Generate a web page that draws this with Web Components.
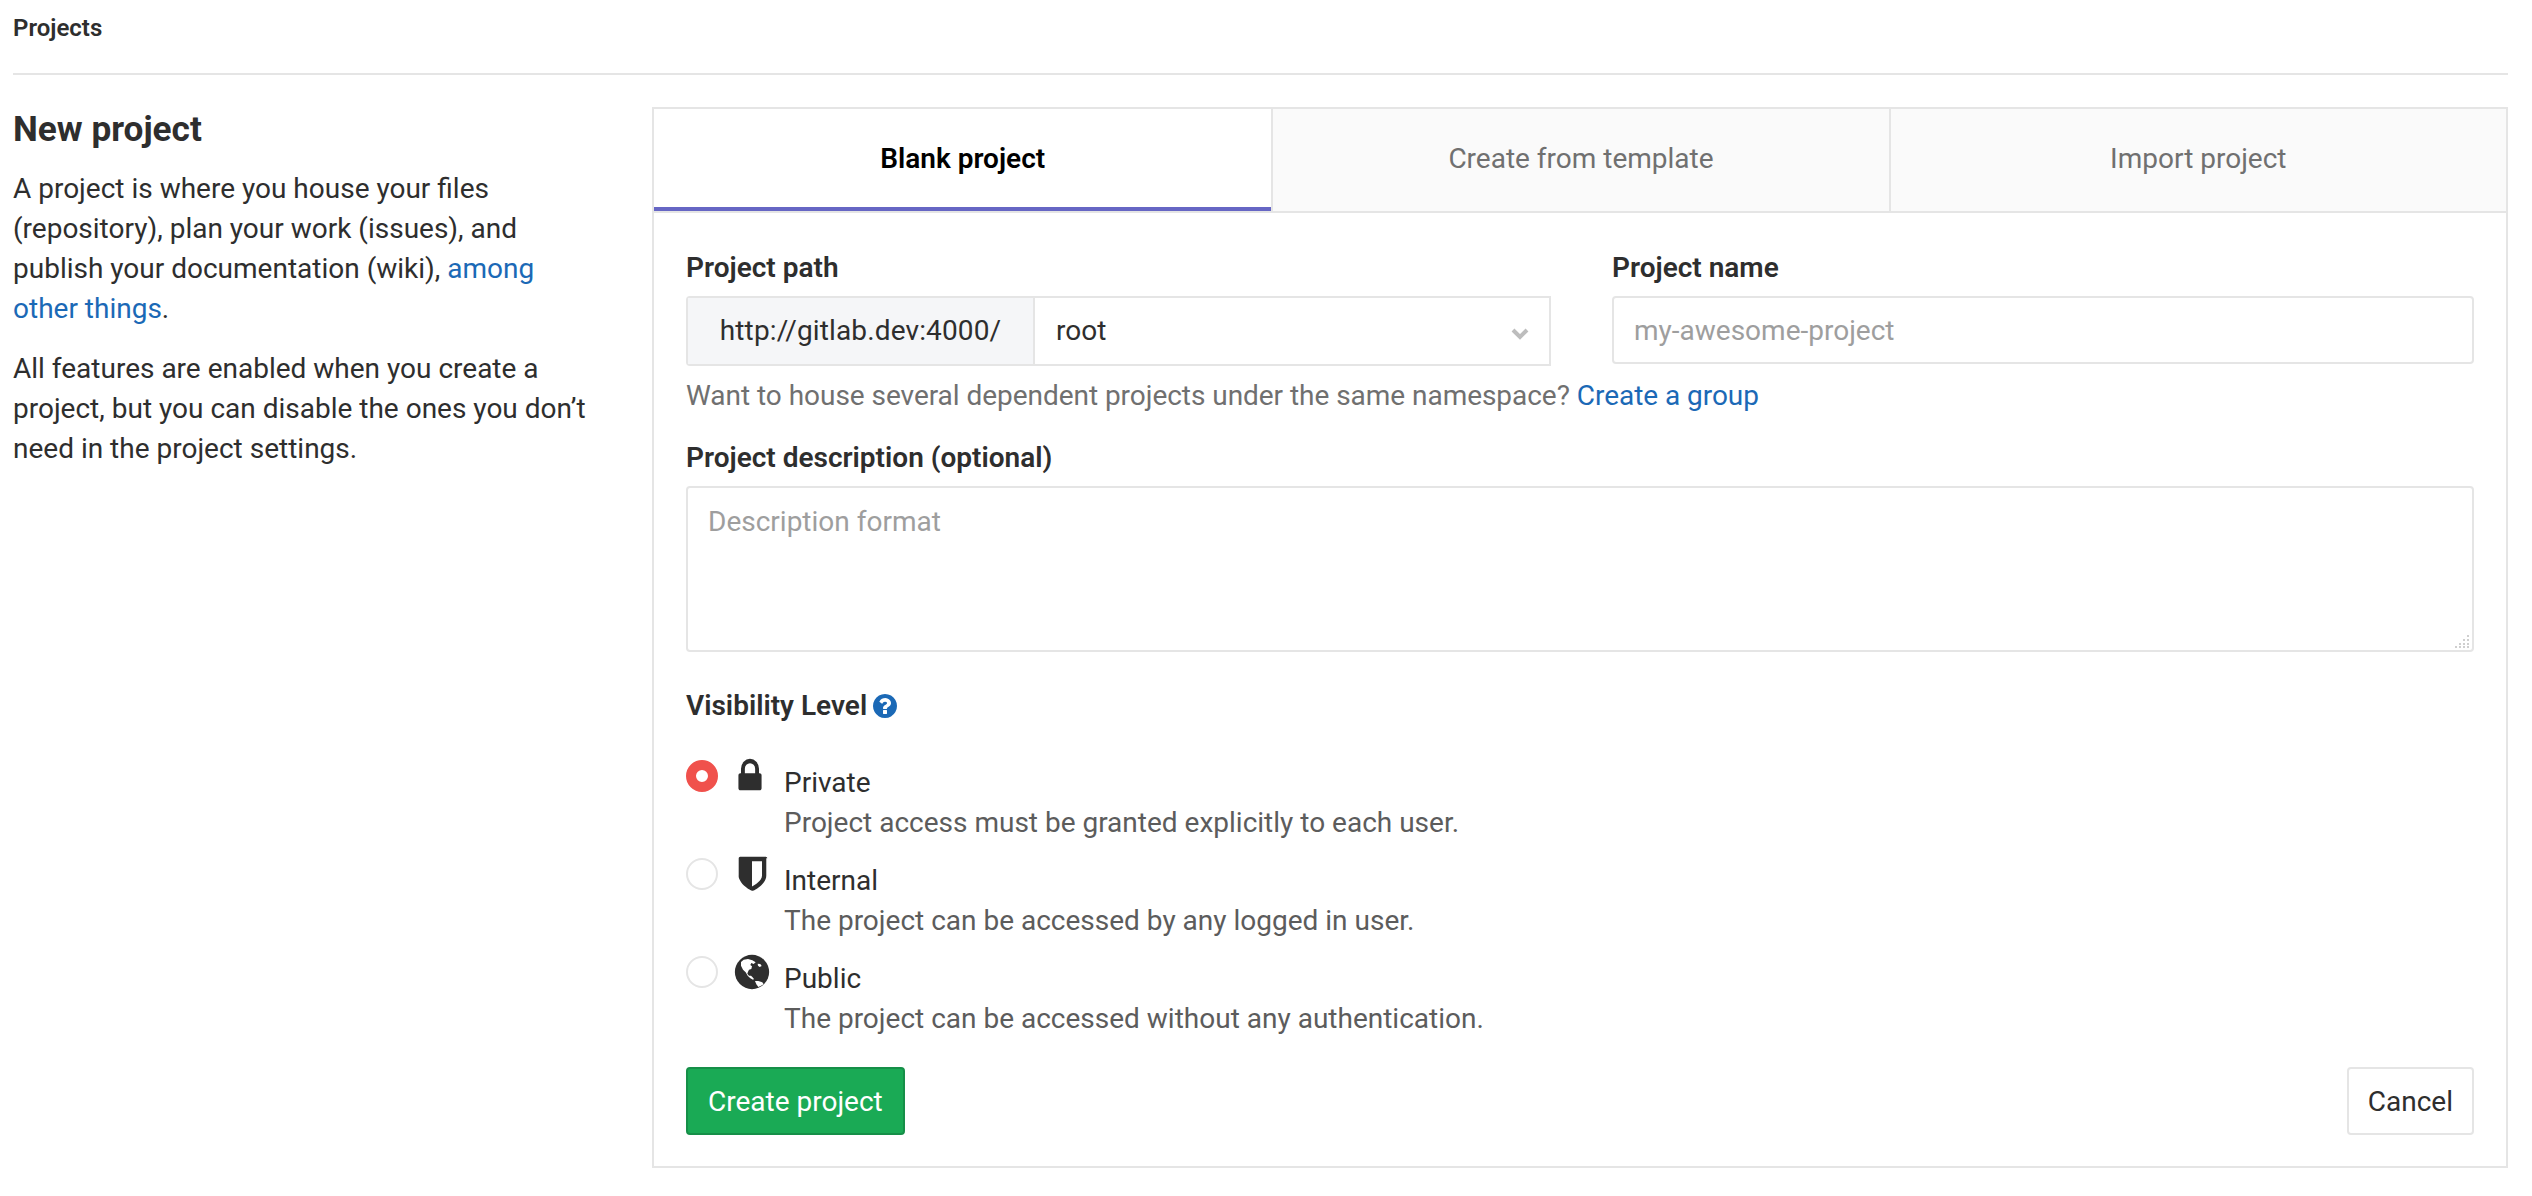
<!doctype html>
<html lang="en">
<head>
<meta charset="utf-8">
<title>New project</title>
<style>
  html, body { margin: 0; background: #fff; }
  body { font: 28px/40px Roboto, "Liberation Sans", sans-serif; color: #2e2e2e; }
</style>
</head>
<body>
<gl-page>
  <gl-crumbs slot="top">Projects</gl-crumbs>
  <gl-intro slot="side">
    <span slot="title">New project</span>
    <p>A project is where you house your files (repository), plan your work (issues), and publish your documentation (wiki), <gl-link>among other things</gl-link>.</p>
    <p>All features are enabled when you create a project, but you can disable the ones you don’t need in the project settings.</p>
  </gl-intro>
  <gl-panel slot="main">
    <gl-tab slot="tabs" active>Blank project</gl-tab>
    <gl-tab slot="tabs">Create from template</gl-tab>
    <gl-tab slot="tabs">Import project</gl-tab>

    <gl-path-row>
      <gl-field slot="path" label="Project path">
        <gl-namespace-select prefix="http://gitlab.dev:4000/" value="root"></gl-namespace-select>
      </gl-field>
      <gl-field slot="name" label="Project name">
        <gl-input placeholder="my-awesome-project"></gl-input>
      </gl-field>
    </gl-path-row>
    <gl-hint>Want to house several dependent projects under the same namespace? <gl-link>Create a group</gl-link></gl-hint>

    <gl-field label="Project description (optional)">
      <gl-textarea placeholder="Description format"></gl-textarea>
    </gl-field>

    <gl-visibility>
      <gl-radio icon="lock" title="Private" checked>Project access must be granted explicitly to each user.</gl-radio>
      <gl-radio icon="shield" title="Internal">The project can be accessed by any logged in user.</gl-radio>
      <gl-radio icon="globe" title="Public">The project can be accessed without any authentication.</gl-radio>
    </gl-visibility>

    <gl-actions>
      <gl-button slot="left" variant="success">Create project</gl-button>
      <gl-button slot="right">Cancel</gl-button>
    </gl-actions>
  </gl-panel>
</gl-page>

<script>
const define = (tag, html, Base = HTMLElement) => {
  customElements.define(tag, class extends Base {
    constructor() {
      super()
      this.attachShadow({ mode: 'open' })
      this.shadowRoot.innerHTML = (typeof html === 'function' ? html(this) : html).trim()
    }
  })
}

// font-awesome 4 shapes, 1792 grid. the globe continents are traced from the screenshot
const ICONS = {
  lock: '<path d="M640 768h512v-192q0-106-75-181t-181-75-181 75-75 181v192zm832 96v576q0 40-28 68t-68 28h-960q-40 0-68-28t-28-68v-576q0-40 28-68t68-28h32v-192q0-184 132-316t316-132 316 132 132 316v192h32q40 0 68 28t28 68z"/>',
  shield: '<path d="M1344 960v-640h-448v1137q119-63 213-137 235-184 235-360zm192-768v768q0 86-33.5 170.5t-83 150-118 127.5-126.5 103-121 77.5-89.5 42.5-30.5 12q-8 3-16 3t-16-3q-14-6-30.5-12t-89.5-42.5-121-77.5-126.5-103-118-127.5-83-150-33.5-170.5v-768q0-26 19-45t45-19h1152q26 0 45 19t19 45z"/>',
  help: '<path d="M1024 1376v-192q0-14-9-23t-23-9h-192q-14 0-23 9t-9 23v192q0 14 9 23t23 9h192q14 0 23-9t9-23zm256-672q0-88-55.5-163t-138.5-116-170-41q-243 0-371 213-15 24 8 42l132 100q7 6 19 6 16 0 25-12 53-68 86-92 34-24 86-24 48 0 85.5 26t37.5 59q0 38-20 61t-68 45q-63 28-115.5 86.5t-52.5 125.5v36q0 14 9 23t23 9h192q14 0 23-9t9-23q0-19 21.5-49.5t54.5-49.5q32-18 49-28.5t46-35 44.5-48 28-60.5 12.5-81zm384 192q0 209-103 385.5t-279.5 279.5-385.5 103-385.5-103-279.5-279.5-103-385.5 103-385.5 279.5-279.5 385.5-103 385.5 103 279.5 279.5 103 385.5z"/>',
  globe: '<circle cx="896" cy="896" r="768"/><g fill="#fff" transform="translate(896 896) scale(14.93) translate(-57 -57)"><path d="M24 27l8-7 13-2 13 4 10 6-6 5-7-3-3 6 5 4-2 8-7 2-3 6-2 6 5 6 6 0 4 4 5 6-3 2-8-4-8-8-6-10-8-8-6-12z"/><path d="M66 84l10 0 12 4 4 6-8 4-8 4-6-8z"/><path d="M74 32l8 1 4 6-6 3-5-4z"/></g>'
}
const icon = (name, w, h = w) => `<svg xmlns="http://www.w3.org/2000/svg" viewBox="0 0 1792 1792" width="${w}" height="${h}" preserveAspectRatio="none" fill="currentColor">${ICONS[name]}</svg>`

define('gl-page', `
  <style>
    :host { display: block; padding: 0 24px 0 13px; }
    .grid { display: grid; grid-template-columns: 639px 1fr; margin-top: 32px; }
  </style>
  <slot name="top"></slot>
  <div class="grid">
    <slot name="side"></slot>
    <slot name="main"></slot>
  </div>
`)

define('gl-crumbs', `
  <style>
    :host { display: block; height: 73px; line-height: 56px; border-bottom: 2px solid #e5e5e5; font-size: 24px; font-weight: 600; }
  </style>
  <slot></slot>
`)

define('gl-intro', `
  <style>
    :host { display: block; padding-right: 60px; }
    h3 { margin: 0 0 18px; font-size: 35.2px; line-height: 44px; font-weight: 700; }
    ::slotted(p) { margin: 0 0 20px; }
  </style>
  <h3><slot name="title"></slot></h3>
  <slot></slot>
`)

define('gl-link', `
  <style>:host { color: #1b69b6; }</style>
  <slot></slot>
`)

define('gl-panel', `
  <style>
    :host { display: block; border: 2px solid #e5e5e5; height: 1061px; box-sizing: border-box; }
    .tabs { display: grid; grid-template-columns: repeat(3, 1fr); border-bottom: 2px solid #e5e5e5; }
    .body { display: block; padding: 37px 32px 0; }
  </style>
  <div class="tabs"><slot name="tabs"></slot></div>
  <div class="body"><slot></slot></div>
`)

define('gl-tab', `
  <style>
    :host { display: block; height: 102px; line-height: 100px; box-sizing: border-box; text-align: center; background: #fafafa; color: #707070; border-left: 2px solid #e5e5e5; }
    :host(:first-child) { border-left: 0; }
    :host([active]) { background: #fff; color: #000; font-weight: 600; border-bottom: 4px solid #6666c4; }
  </style>
  <slot></slot>
`)

define('gl-field', el => `
  <style>
    :host { display: block; }
    label { display: block; font-weight: 600; line-height: 36px; margin-bottom: 10px; }
  </style>
  <label>${el.getAttribute('label')}</label>
  <slot></slot>
`)

define('gl-path-row', `
  <style>
    :host { display: flex; gap: 61px; }
    ::slotted([slot=path]) { width: 865px; flex: none; }
    ::slotted([slot=name]) { flex: 1; }
  </style>
  <slot name="path"></slot>
  <slot name="name"></slot>
`)

define('gl-namespace-select', el => `
  <style>
    :host { display: flex; height: 70px; box-sizing: border-box; border: 2px solid #e5e5e5; border-radius: 4px 0 0 4px; line-height: 66px; }
    .prefix { width: 347px; box-sizing: border-box; text-align: center; background: #f5f6f8; border-right: 2px solid #e5e5e5; letter-spacing: .13px; }
    .value { flex: 1; display: flex; justify-content: space-between; align-items: center; padding: 0 20px 0 21px; }
    svg { display: block; margin-top: 5px; }
  </style>
  <div class="prefix">${el.getAttribute('prefix')}</div>
  <div class="value">
    <span>${el.getAttribute('value')}</span>
    <svg width="18" height="12" viewBox="0 0 18 12"><path d="M2 2l7 7 7-7" fill="none" stroke="#bdbdbd" stroke-width="4"/></svg>
  </div>
`)

define('gl-input', el => `
  <style>
    :host { display: block; height: 68px; box-sizing: border-box; border: 2px solid #e5e5e5; border-radius: 4px; padding: 0 20px; line-height: 66px; color: #9e9e9e; }
  </style>
  ${el.getAttribute('placeholder')}
`)

define('gl-textarea', el => `
  <style>
    :host { display: block; position: relative; height: 166px; box-sizing: border-box; border: 2px solid #e5e5e5; border-radius: 4px; padding: 14px 20px; line-height: 40px; color: #9e9e9e; }
    svg { position: absolute; right: 2px; bottom: 2px; }
  </style>
  ${el.getAttribute('placeholder')}
  <svg width="16" height="14" viewBox="0 0 16 14" fill="#cfcfcf">
    <rect x="13" y="1" width="2" height="2"/><rect x="9" y="5" width="2" height="2"/><rect x="13" y="5" width="2" height="2"/>
    <rect x="5" y="9" width="2" height="2"/><rect x="9" y="9" width="2" height="2"/><rect x="13" y="9" width="2" height="2"/>
    <rect x="1" y="12" width="2" height="2"/><rect x="5" y="12" width="2" height="2"/><rect x="9" y="12" width="2" height="2"/><rect x="13" y="12" width="2" height="2"/>
  </svg>
`)

define('gl-hint', `
  <style>
    :host { display: block; color: #707070; margin: 10px 0 24px; letter-spacing: -.04px; }
  </style>
  <slot></slot>
`)

define('gl-visibility', `
  <style>
    :host { display: block; margin-top: 36px; }
    .title { display: flex; align-items: center; gap: 6px; font-weight: 600; line-height: 36px; margin-bottom: 36px; }
    .title span { color: #1b69b6; display: flex; margin-left: -2px; }
  </style>
  <div class="title">Visibility Level <span>${icon('help', 28)}</span></div>
  <slot></slot>
`)

define('gl-radio', el => `
  <style>
    :host { display: grid; grid-template-columns: 32px 34px 1fr; column-gap: 0; height: 98px; }
    .dot { width: 32px; height: 32px; box-sizing: border-box; border-radius: 50%; border: 2px solid #e5e5e5; }
    :host([checked]) .dot { border: 10px solid #f0514c; background: #fff; }
    .ico { width: 40px; margin-left: 14px; margin-top: -4px; color: #2e2e2e; }
    .text { margin-left: 32px; margin-top: 3px; line-height: 40px; color: #5c5c5c; }
    .text b { display: block; font-weight: 400; color: #2e2e2e; }
  </style>
  <div class="dot"></div>
  <div class="ico">${el.getAttribute('icon') === 'lock' ? icon('lock', 36, 40) : icon(el.getAttribute('icon'), 40)}</div>
  <div class="text"><b>${el.getAttribute('title')}</b><slot></slot></div>
`)

define('gl-actions', `
  <style>
    :host { display: flex; justify-content: space-between; margin-top: 13px; }
  </style>
  <slot name="left"></slot>
  <slot name="right"></slot>
`)

define('gl-button', `
  <style>
    :host { display: block; height: 68px; box-sizing: border-box; padding: 0 19px; line-height: 65px; border: 2px solid #e5e5e5; border-radius: 4px; background: #fff; }
    :host([variant=success]) { padding: 0 20px; background: #1aaa55; border-color: #168f48; color: #fff; }
  </style>
  <slot></slot>
`)
</script>
</body>
</html>
